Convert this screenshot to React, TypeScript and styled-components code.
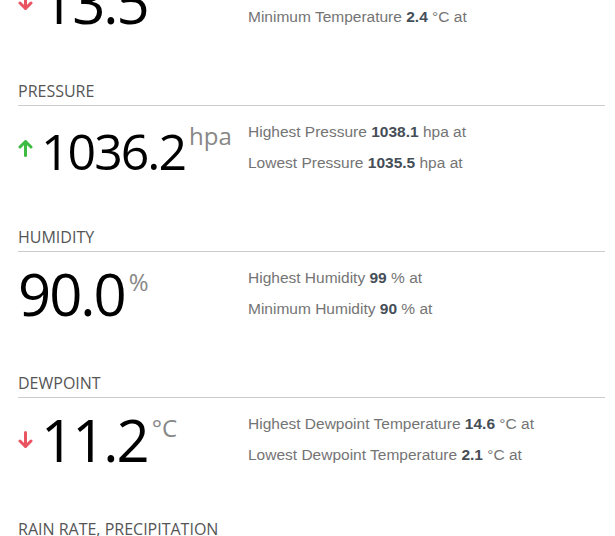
import styled, { createGlobalStyle } from "styled-components";

const GlobalStyle = createGlobalStyle`
  html, body {
    margin: 0;
    padding: 0;
    background: #ffffff;
    overflow: hidden;
  }
`;

const Page = styled.div`
  margin-top: -65px;
  padding: 0 10px 0 18px;
  font-family: "Open Sans", "Noto Sans", sans-serif;
`;

const Section = styled.section`
  display: grid;
  grid-template-rows: auto 121px;
`;

const Title = styled.h2`
  margin: 0;
  padding-bottom: 4px;
  border-bottom: 1px solid #cccccc;
  font-size: 16px;
  line-height: 20px;
  font-weight: 400;
  color: #555555;
  text-transform: uppercase;
`;

const Body = styled.div`
  display: grid;
  grid-template-columns: 230px 1fr;
  padding-top: 10px;
`;

const Reading = styled.div`
  font-size: 58px;
  line-height: 63px;
  color: #000000;
  white-space: nowrap;
`;

const Value = styled.span<{ $size: number }>`
  font-size: ${(p) => p.$size}px;
  letter-spacing: -2px;
`;

const Unit = styled.span`
  font-size: 24px;
  line-height: 0;
  letter-spacing: 0;
  color: #888888;
  vertical-align: 25px;
  margin-left: 4px;
`;

const Trend = styled.svg<{ $up: boolean }>`
  width: 15px;
  height: 18px;
  margin-right: 8px;
  vertical-align: 13px;
  stroke: ${(p) => (p.$up ? "#3dbb43" : "#ea5360")};
`;

const Stats = styled.div`
  font-family: "Liberation Sans", Arial, sans-serif;
  font-size: 15.5px;
  line-height: 31px;
  color: #747474;
`;

const StatLine = styled.div`
  white-space: nowrap;
`;

const StatValue = styled.b`
  color: #454e57;
`;

type TrendDir = "up" | "down" | null;

interface Stat {
  label: string;
  value: string;
  unit: string;
}

interface Reading {
  title: string;
  value: string;
  unit: string;
  size: number;
  trend: TrendDir;
  stats: Stat[];
}

const readings: Reading[] = [
  {
    title: "Temperature",
    value: "13.5",
    unit: "°C",
    size: 58,
    trend: "down",
    stats: [
      { label: "Highest Temperature", value: "16.1", unit: "°C" },
      { label: "Minimum Temperature", value: "2.4", unit: "°C" },
    ],
  },
  {
    title: "Pressure",
    value: "1036.2",
    unit: "hpa",
    size: 50,
    trend: "up",
    stats: [
      { label: "Highest Pressure", value: "1038.1", unit: "hpa" },
      { label: "Lowest Pressure", value: "1035.5", unit: "hpa" },
    ],
  },
  {
    title: "Humidity",
    value: "90.0",
    unit: "%",
    size: 58,
    trend: null,
    stats: [
      { label: "Highest Humidity", value: "99", unit: "%" },
      { label: "Minimum Humidity", value: "90", unit: "%" },
    ],
  },
  {
    title: "Dewpoint",
    value: "11.2",
    unit: "°C",
    size: 58,
    trend: "down",
    stats: [
      { label: "Highest Dewpoint Temperature", value: "14.6", unit: "°C" },
      { label: "Lowest Dewpoint Temperature", value: "2.1", unit: "°C" },
    ],
  },
  {
    title: "Rain Rate, Precipitation",
    value: "0.0",
    unit: "mm",
    size: 58,
    trend: null,
    stats: [
      { label: "Rain Rate", value: "0.0", unit: "mm/hr" },
      { label: "Rain Today", value: "0.0", unit: "mm" },
    ],
  },
];

const TrendArrow = ({ dir }: { dir: "up" | "down" }) => (
  <Trend $up={dir === "up"} viewBox="0 0 15 18" fill="none" strokeWidth={3} strokeLinecap="round" strokeLinejoin="round">
    {dir === "up" ? (
      <>
        <path d="M7.5 16.5V3" />
        <path d="M2 8l5.5-5.5L13 8" />
      </>
    ) : (
      <>
        <path d="M7.5 1.5V15" />
        <path d="M2 10l5.5 5.5L13 10" />
      </>
    )}
  </Trend>
);

const App = () => {
  return (
    <>
      <GlobalStyle />
      <Page>
        {readings.map((r) => (
          <Section key={r.title}>
            <Title>{r.title}</Title>
            <Body>
              <Reading>
                {r.trend ? <TrendArrow dir={r.trend} /> : null}
                <Value $size={r.size}>
                  {r.value}
                  <Unit>{r.unit}</Unit>
                </Value>
              </Reading>
              <Stats>
                {r.stats.map((s) => (
                  <StatLine key={s.label}>
                    {s.label} <StatValue>{s.value}</StatValue> {s.unit} at
                  </StatLine>
                ))}
              </Stats>
            </Body>
          </Section>
        ))}
      </Page>
    </>
  );
};

export default App;
